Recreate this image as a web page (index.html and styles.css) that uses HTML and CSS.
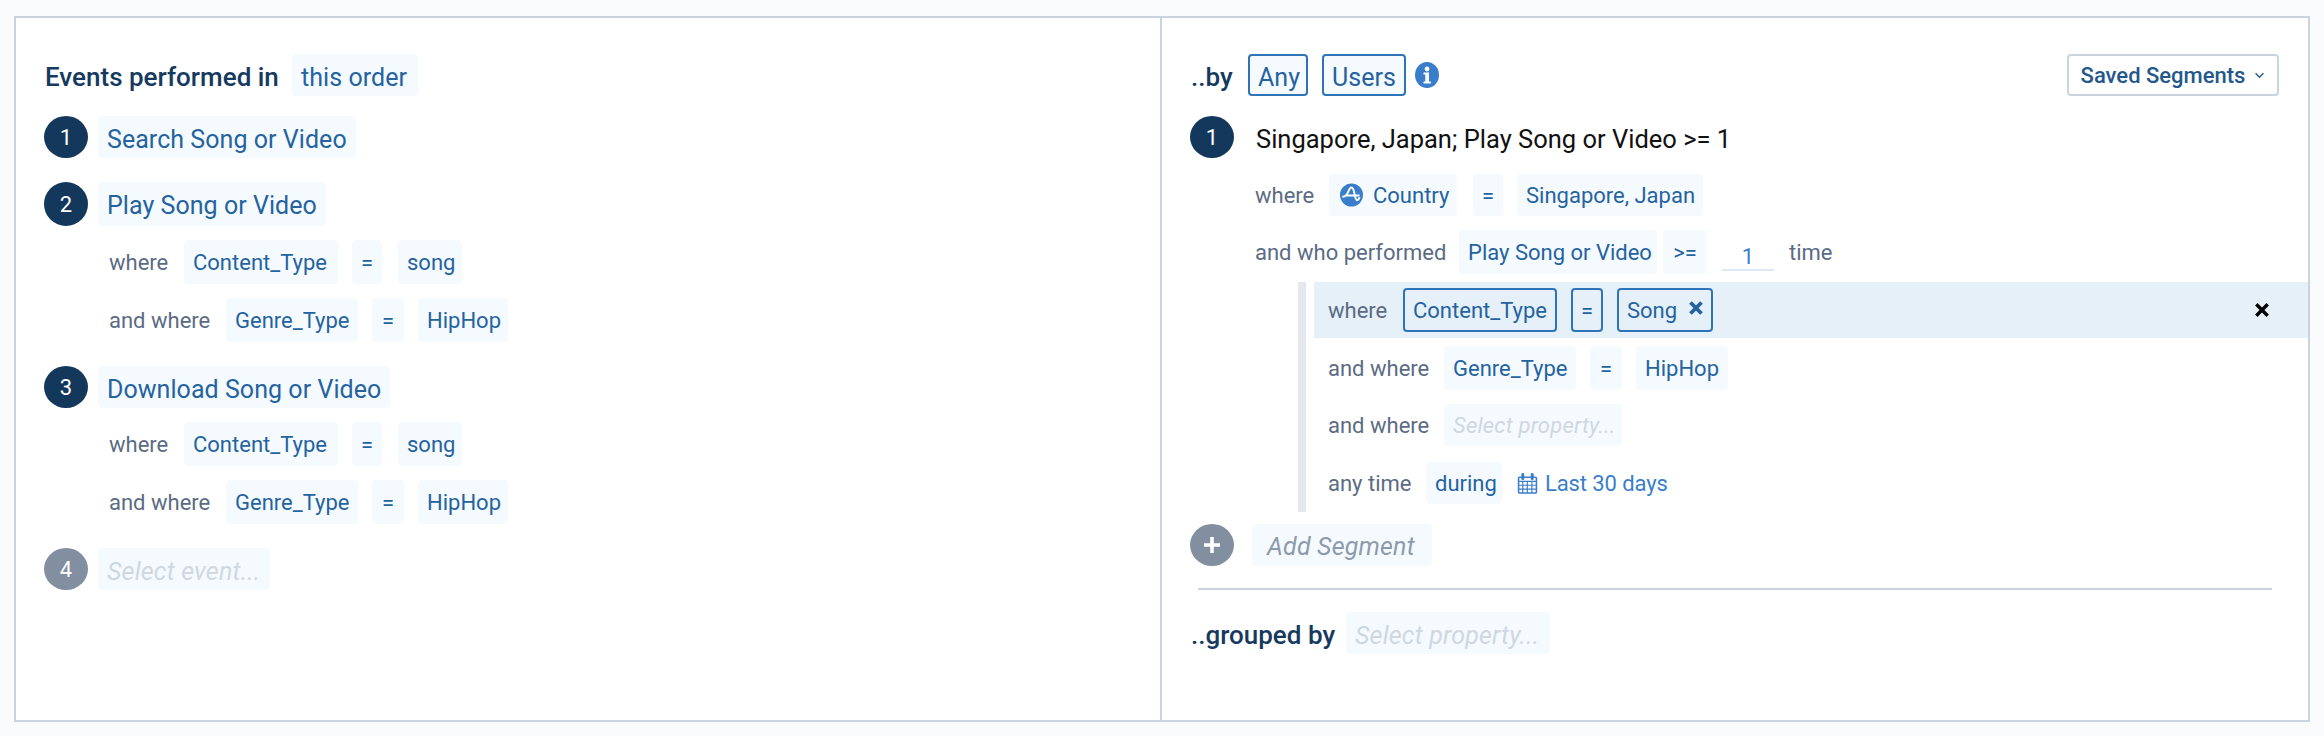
FILE: index.html
```html
<!DOCTYPE html>
<html lang="en">
<head>
<meta charset="utf-8">
<title>Segments</title>
<link rel="stylesheet" href="styles.css">
</head>
<body>
<main class="frame">
  <section class="panel panel-left">
    <div class="row head">
      <strong class="title t-events">Events performed in</strong>
      <span class="chip big c126">this order</span>
    </div>
    <div class="row step s1"><span class="badge">1</span><span class="chip big">Search Song or Video</span></div>
    <div class="row step tall"><span class="badge">2</span><span class="chip big">Play Song or Video</span></div>
    <div class="row sub"><span class="label l75">where</span><span class="chip c154">Content_Type</span><span class="chip eq g14">=</span><span class="chip c64 g16">song</span></div>
    <div class="row sub"><span class="label l117">and where</span><span class="chip c132">Genre_Type</span><span class="chip eq wide g14">=</span><span class="chip c90 g14">HipHop</span></div>
    <div class="row step"><span class="badge">3</span><span class="chip big">Download Song or Video</span></div>
    <div class="row sub"><span class="label l75">where</span><span class="chip c154">Content_Type</span><span class="chip eq g14">=</span><span class="chip c64 g16">song</span></div>
    <div class="row sub"><span class="label l117">and where</span><span class="chip c132">Genre_Type</span><span class="chip eq wide g14">=</span><span class="chip c90 g14">HipHop</span></div>
    <div class="row step"><span class="badge muted">4</span><span class="chip big placeholder c172">Select event...</span></div>
  </section>
  <section class="panel panel-right">
    <div class="row head">
      <strong class="title by-t">..by</strong>
      <span class="chip big boxed c60">Any</span>
      <span class="chip big boxed c84 g14">Users</span>
      <svg class="info" viewBox="0 0 24 26" aria-hidden="true"><ellipse cx="12" cy="13" rx="12" ry="13" fill="#3a7ecb"/><circle cx="12" cy="7" r="2.400" fill="#fff"/><path d="M8.500 10.500h5.500v9h1.800v2H8.500v-2h1.800v-7H8.500z" fill="#fff"/></svg>
      <button class="saved">Saved Segments<svg class="chev" viewBox="0 0 12 8" aria-hidden="true"><path d="M1.500 1.500 6 6l4.500-4.500" fill="none" stroke="#24588c" stroke-width="1.500"/></svg></button>
    </div>
    <div class="row step s1"><span class="badge">1</span><span class="seg-name">Singapore, Japan; Play Song or Video &gt;= 1</span></div>
    <div class="row sub r-where"><span class="label l74">where</span><span class="chip icon-chip"><svg class="amp" viewBox="0 0 20 20" aria-hidden="true"><circle cx="10" cy="10" r="10" fill="#3a7ecb"/><path d="M2 11.500c2.500 0 4-1.500 5-4C8 5 9 3.500 10 3.500s1.800 1.500 2.500 5c.6 3.500 1.300 6 2.500 6 1 0 1.500-1 2-2.500M4.500 10.500h12.500" fill="none" stroke="#fff" stroke-width="1.700"/></svg>Country</span><span class="chip eq g16">=</span><span class="chip c186 g14">Singapore, Japan</span></div>
    <div class="row sub r-perf"><span class="label l204">and who performed</span><span class="chip c198">Play Song or Video</span><span class="chip gte">&gt;=</span><span class="num">1</span><span class="label time">time</span></div>
    <div class="nest">
      <div class="row hl"><span class="label l75">where</span><span class="chip boxed c154">Content_Type</span><span class="chip boxed eq wide g14">=</span><span class="chip boxed song c96 g14">Song<svg class="x-mini" viewBox="0 0 14 14" aria-hidden="true"><path d="M1.500 1.500l11 11m0-11-11 11" stroke="#24639f" stroke-width="3.800"/></svg></span>
        <svg class="x-close" viewBox="0 0 14 14" aria-hidden="true"><path d="M1.300 1.300l11.400 11.400m0-11.400L1.300 12.700" stroke="#000" stroke-width="3.400"/></svg></div>
      <div class="row nsub"><span class="label l116">and where</span><span class="chip c132">Genre_Type</span><span class="chip eq wide g14">=</span><span class="chip c92 g14">HipHop</span></div>
      <div class="row nsub short"><span class="label l116">and where</span><span class="chip placeholder c178">Select property...</span></div>
      <div class="row nsub short time-row"><span class="label l98">any time</span><span class="chip c78">during</span><svg class="cal" viewBox="0 0 18 20" aria-hidden="true"><path d="M1.500 4h15a1 1 0 0 1 1 1v13a1 1 0 0 1-1 1h-15a1 1 0 0 1-1-1V5a1 1 0 0 1 1-1z" fill="none" stroke="#3a7ecb" stroke-width="1.500"/><path d="M1 8h16M1 11.700h16M1 15.300h16M4.500 8v11M8.800 8v11M13.200 8v11" stroke="#3a7ecb" stroke-width="1.100"/><path d="M4.500 1.500v4M13.500 1.500v4" stroke="#3a7ecb" stroke-width="2.800" stroke-linecap="round"/></svg><span class="range">Last 30 days</span></div>
    </div>
    <div class="row add"><span class="badge muted"><svg class="plus" viewBox="0 0 16 16" aria-hidden="true"><path d="M8 0v16M0 8h16" stroke="#fff" stroke-width="3.600"/></svg></span><span class="chip big add-chip">Add Segment</span></div>
    <hr class="rule">
    <div class="row grouped"><strong class="title t-group">..grouped by</strong><span class="chip big placeholder c204">Select property...</span></div>
  </section>
</main>
</body>
</html>
```

FILE: styles.css
```css
* { box-sizing: border-box; }
html, body { margin: 0; height: 100%; }
body {
  background: #fafbfc;
  padding: 16px 14px 0 14px;
  font-family: "Roboto", "Noto Sans", sans-serif;
  font-size: 22px;
  color: #24639f;
}
.frame {
  display: flex;
  width: 2296px;
  height: 706px;
  border: 2px solid #c9d4df;
  background: #fff;
}
.panel { min-width: 0; }
.panel-left { width: 1144px; padding: 36px 0 0 28px; }
.panel-right { flex: 1; border-left: 2px solid #c9d4df; padding: 36px 0 0 28px; }
.row { display: flex; align-items: center; }
.head { height: 42px; }
.title { font-size: 26px; font-weight: 500; color: #163a5f; white-space: nowrap; padding-top: 3px; }
.t-events { width: 248px; padding-left: 1px; }
.by-t { width: 58px; padding-left: 1px; }
.t-group { width: 156px; padding-left: 1px; }
.chip {
  display: inline-flex;
  align-items: center;
  height: 44px;
  padding: 1px 9px 0;
  border-radius: 4px;
  background: #f5faff;
  white-space: nowrap;
}
.big { font-size: 25px; height: 100%; padding: 5px 9px 0; letter-spacing: .05px; }
.boxed.big { padding-left: 8px; }
.c60 { width: 60px; }
.c64 { width: 64px; }
.c78 { width: 76px; }
.c84 { width: 84px; }
.c90 { width: 90px; }
.c92 { width: 92px; }
.c96 { width: 96px; }
.c126 { width: 126px; }
.c132 { width: 132px; }
.c154 { width: 154px; }
.c172 { width: 172px; }
.c178 { width: 178px; }
.c186 { width: 186px; }
.c198 { width: 198px; }
.c204 { width: 204px; }
.step { height: 42px; margin-top: 24px; gap: 10px; }
.step.s1 { margin-top: 20px; }
.step.tall { height: 44px; }
.step.tall .big { padding-top: 3px; }
.badge {
  display: flex;
  align-items: center;
  justify-content: center;
  flex: none;
  width: 44px;
  height: 100%;
  border-radius: 50%;
  background: #14385c;
  color: #fff;
  font-size: 22px;
}
.badge.muted { background: #818fa0; }
.sub { height: 44px; margin-top: 14px; padding-left: 65px; }
.label { color: #5b6b84; white-space: nowrap; padding-top: 1px; }
.l74 { width: 74px; }
.l75 { width: 75px; }
.l98 { width: 98px; }
.l116 { width: 116px; }
.l117 { width: 117px; }
.l204 { width: 204px; }
.eq { width: 30px; padding: 0; justify-content: center; }
.eq.wide { width: 32px; }
.g14 { margin-left: 14px; }
.g16 { margin-left: 16px; }
.placeholder { color: #cfd7e0; font-style: italic; letter-spacing: .2px; }
.boxed { border: 2px solid #2f74b8; }
.info { width: 26px; height: 26px; margin-left: 8px; }
.saved {
  margin-left: auto;
  margin-right: 29px;
  width: 212px;
  height: 42px;
  padding: 0;
  display: flex;
  align-items: center;
  justify-content: center;
  gap: 9px;
  background: #fff;
  border: 2px solid #c9d4df;
  border-radius: 4px;
  font: 500 22px "Roboto", sans-serif;
  color: #24588c;
}
.chev { width: 11px; height: 7px; }
.seg-name { font-size: 25.500px; color: #111; margin-left: 12px; padding-top: 4px; }
.r-where { height: 42px; margin-top: 16px; }
.r-where .chip { height: 100%; padding-top: 0; }
.r-where .label { padding-top: 0; }
.icon-chip { gap: 10px; width: 128px; padding-left: 11px; }
.amp { flex: none; width: 23px; height: 24px; }
.r-perf { margin-top: 14px; }
.gte { margin-left: 6px; width: 44px; justify-content: center; padding: 0; }
.num { width: 52px; height: 24px; margin: 0 0 3px 15px; border-bottom: 2px solid #dbe8f5; text-align: center; line-height: 19px; color: #3a7ecb; align-self: flex-end; }
.time { margin-left: 15px; }
.nest { margin: 8px 0 0 108px; border-left: 8px solid #e4e8ee; padding: 0 0 8px 8px; }
.hl { height: 56px; background: #e5f0f9; padding: 0 39px 0 14px; }
.hl .chip { background: #e5f0f9; height: 44px; padding-left: 8px; }
.hl .eq { padding: 0; }
.song { gap: 12px; }
.x-mini { flex: none; width: 14px; height: 14px; margin-top: -6px; }
.x-close { width: 14px; height: 14px; margin-left: auto; }
.nsub { height: 44px; margin-top: 8px; padding-left: 14px; }
.nsub.short { height: 42px; margin-top: 14px; }
.nsub.short .chip { height: 100%; }
.nsub.time-row { margin-top: 16px; }
.cal { width: 21px; height: 21px; margin-left: 15px; }
.range { color: #3a7ecb; margin-left: 7px; padding-top: 1px; letter-spacing: -.1px; }
.add { height: 42px; margin-top: 12px; gap: 18px; }
.plus { width: 16px; height: 16px; }
.add-chip { color: #8d9aab; font-style: italic; padding: 3px 15px 0; letter-spacing: .2px; width: 180px; }
.rule { margin: 22px 36px 0 8px; border: 0; height: 2px; background: #c9d4df; }
.grouped { height: 42px; margin-top: 22px; }
```
